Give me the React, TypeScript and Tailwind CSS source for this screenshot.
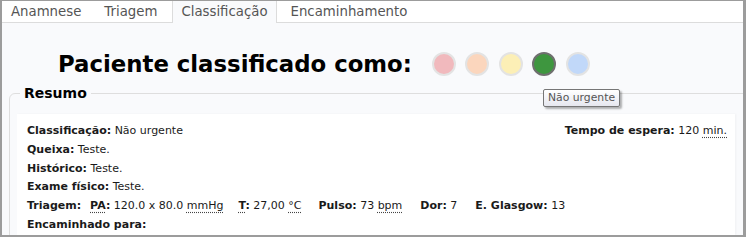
import React from "react";

const tabs = ["Anamnese", "Triagem", "Classificação", "Encaminhamento"];

const levels = [
  { color: "bg-[#f1b9bd]", ring: "border-[#e3e3e3]" },
  { color: "bg-[#fbd6bd]", ring: "border-[#e3e3e3]" },
  { color: "bg-[#fcefb6]", ring: "border-[#e3e3e3]" },
  { color: "bg-[#3e963f]", ring: "border-[#6f6f6f]" },
  { color: "bg-[#c1d8f9]", ring: "border-[#e3e3e3]" },
];

function Abbr({ children }: { children: React.ReactNode }) {
  return (
    <abbr className="underline decoration-dotted underline-offset-[3px] decoration-[#444]">
      {children}
    </abbr>
  );
}

export default function App() {
  return (
    <div
      className="w-[746px] h-[237px] overflow-hidden border-t border-l-2 border-r-[3px] border-b-2 border-[#9c9c9c] bg-[#f9fafc] relative"
      style={{ fontFamily: '"DejaVu Sans", Verdana, sans-serif' }}
    >
      {/* Tabs */}
      <div className="flex h-[22px] bg-white border-b border-[#dcdcdc] gap-[5px]">
        {tabs.map((t, i) => (
          <div
            key={t}
            className={
              "px-[8px] text-[13.3px] leading-[21px] text-[#555] border-x " +
              (i === 2
                ? "bg-[#f9fafc] border-[#dcdcdc] h-[22px] ml-[1px]"
                : "border-transparent")
            }
          >
            {t}
          </div>
        ))}
      </div>

      {/* Title */}
      <div className="flex items-center h-[30px] mt-[26px] pl-[56px]">
        <h1 className="text-[22.8px] font-bold text-black leading-[30px]">
          Paciente classificado como:
        </h1>
        <div className="flex gap-[9.5px] ml-[20px]">
          {levels.map((l, i) => (
            <span
              key={i}
              className={"block w-[24px] h-[24px] rounded-full border-2 " + l.color + " " + l.ring}
            />
          ))}
        </div>
      </div>

      {/* Resumo */}
      <fieldset className="border border-[#dedede] rounded-tl-[6px] ml-[7px] mr-[-10px] mt-[5px] px-[7px] pb-[10px]">
        <legend className="ml-[3px] px-[4px] text-[14px] font-bold leading-[18px] text-black">
          Resumo
        </legend>
        <div className="w-[718px] mt-[12px] bg-white pl-[10px] pr-[8px] pt-[8px] text-[11px] leading-[18.8px] text-[#1a1a1a] shadow-[1px_0_2px_rgba(0,0,0,0.04)]">
          <div className="flex justify-between">
            <span>
              <b>Classificação:</b> Não urgente
            </span>
            <span>
              <b>Tempo de espera:</b> 120 <Abbr>min.</Abbr>
            </span>
          </div>
          <div>
            <b>Queixa:</b> Teste.
          </div>
          <div>
            <b>Histórico:</b> Teste.
          </div>
          <div>
            <b>Exame físico:</b> Teste.
          </div>
          <div>
            <b>Triagem:</b>
            <span className="ml-[9px]">
              <b>
                <Abbr>PA</Abbr>:
              </b>{" "}
              120.0 x 80.0 <Abbr>mmHg</Abbr>
            </span>
            <span className="ml-[15px]">
              <b>
                <Abbr>T</Abbr>:
              </b>{" "}
              27,00 <Abbr>°C</Abbr>
            </span>
            <span className="ml-[17px]">
              <b>Pulso:</b> 73 <Abbr>bpm</Abbr>
            </span>
            <span className="ml-[18px]">
              <b>Dor:</b> 7
            </span>
            <span className="ml-[18px]">
              <b>E. Glasgow:</b> 13
            </span>
          </div>
          <div>
            <b>Encaminhado para:</b>
          </div>
        </div>
      </fieldset>

      {/* Tooltip */}
      <div className="absolute left-[541px] top-[88px] h-[18px] px-[4px] border border-[#767676] bg-gradient-to-b from-white to-[#e6e7ef] text-[10.8px] leading-[16px] text-[#555] shadow-[2px_2px_2px_rgba(0,0,0,0.3)] rounded-[2px]">
        Não urgente
      </div>
    </div>
  );
}
